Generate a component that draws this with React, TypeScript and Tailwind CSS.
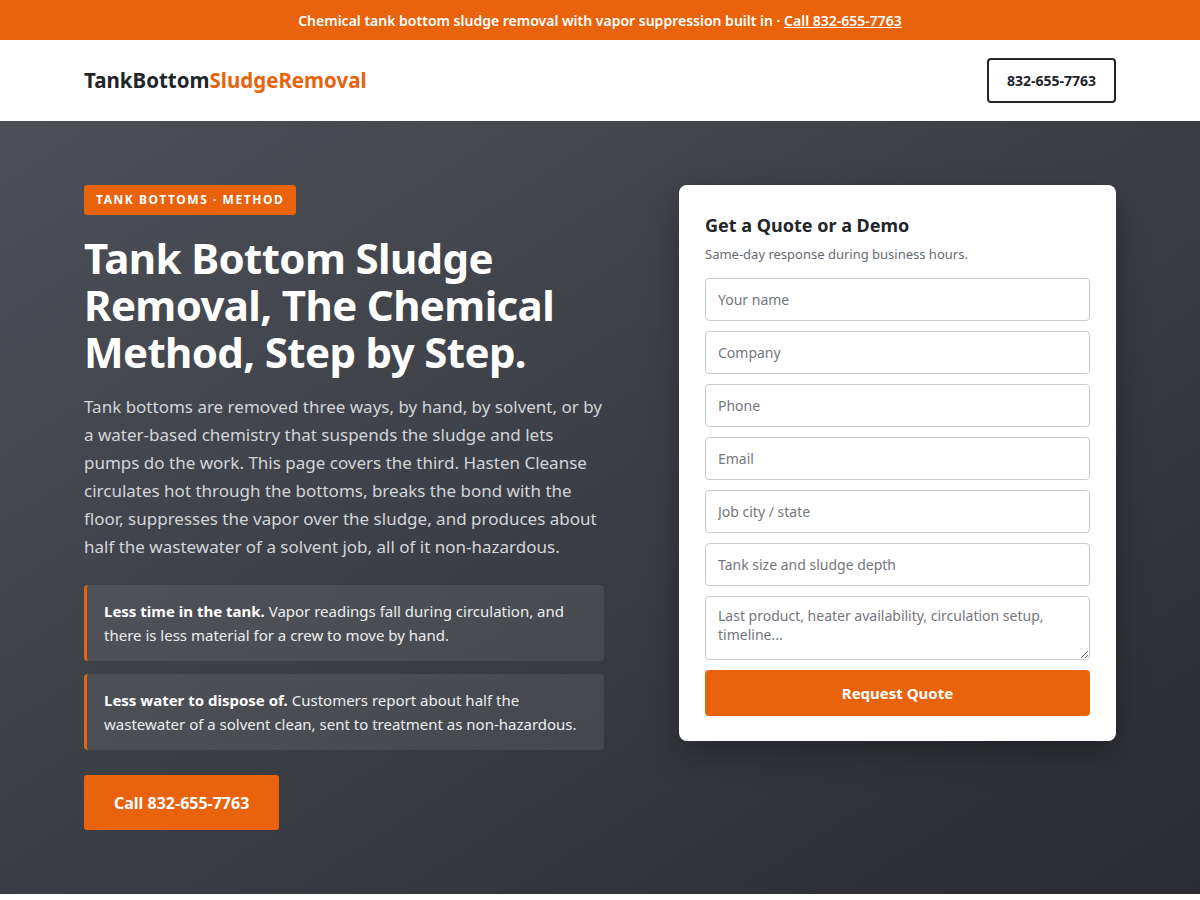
const fields = ["Your name", "Company", "Phone", "Email", "Job city / state", "Tank size and sludge depth"];

const points = [
  {
    lead: "Less time in the tank.",
    text: " Vapor readings fall during circulation, and there is less material for a crew to move by hand.",
  },
  {
    lead: "Less water to dispose of.",
    text: " Customers report about half the wastewater of a solvent clean, sent to treatment as non-hazardous.",
  },
];

export default function App() {
  return (
    <div className="min-h-[900px] bg-white font-['Noto_Sans',_'Open_Sans',_sans-serif] text-[#1f2328]">
      {/* Announcement bar */}
      <div className="flex h-10 items-center justify-center bg-[#e8630c] text-[14px] font-semibold text-white">
        <span>
          Chemical tank bottom sludge removal with vapor suppression built in ·{" "}
          <a href="#" className="underline">
            Call 832-655-7763
          </a>
        </span>
      </div>

      {/* Header */}
      <header className="bg-white">
        <div className="mx-auto flex h-[81px] max-w-[1032px] items-center justify-between">
          <div className="text-[20.5px] font-bold">
            <span className="text-[#22252a]">TankBottom</span>
            <span className="text-[#e8630c]">SludgeRemoval</span>
          </div>
          <a
            href="#"
            className="flex h-[45px] items-center rounded-[4px] border-2 border-[#22252a] px-[18px] text-[14px] font-bold text-[#22252a]"
          >
            832-655-7763
          </a>
        </div>
      </header>

      {/* Hero */}
      <section className="bg-gradient-to-br from-[#4d5058] to-[#2a2c31] py-16">
        <div className="mx-auto flex max-w-[1032px] justify-between">
          <div className="w-[520px]">
            <span className="inline-flex h-[30px] items-center rounded-[3px] bg-[#e8630c] px-3 text-[12px] font-bold tracking-[0.13em] text-white">
              TANK BOTTOMS · METHOD
            </span>
            <h1 className="mt-[19px] text-[42px] font-bold leading-[47px] tracking-[-0.015em] text-white">
              Tank Bottom Sludge Removal, The Chemical Method, Step by Step.
            </h1>
            <p className="mt-[18px] text-[17px] leading-[28px] text-[#d3d5d9]">
              Tank bottoms are removed three ways, by hand, by solvent, or by a water-based chemistry that suspends the
              sludge and lets pumps do the work. This page covers the third. Hasten Cleanse circulates hot through the
              bottoms, breaks the bond with the floor, suppresses the vapor over the sludge, and produces about half the
              wastewater of a solvent job, all of it non-hazardous.
            </p>
            <div className="mt-6 flex flex-col gap-[13px]">
              {points.map((p, i) => (
                <div
                  key={i}
                  className="rounded-[4px] border-l-[3px] border-[#e8630c] bg-white/[0.08] py-[14px] pl-[17px] pr-4 text-[15px] leading-[24px] text-[#eceef0]"
                >
                  <strong className="font-bold text-white">{p.lead}</strong>
                  {p.text}
                </div>
              ))}
            </div>
            <a
              href="#"
              className="mt-[25px] inline-flex h-[55px] items-center rounded-[3px] bg-[#e8630c] px-[30px] text-[16px] font-bold text-white"
            >
              Call 832-655-7763
            </a>
          </div>

          {/* Form card */}
          <div className="h-fit w-[437px] rounded-lg bg-white px-[26px] pb-[25px] pt-[27px] shadow-[0_12px_32px_rgba(0,0,0,0.3)]">
            <h2 className="text-[18px] font-bold leading-[26px] text-[#22252a]">Get a Quote or a Demo</h2>
            <p className="mt-[7px] text-[13px] leading-[18px] text-[#676b72]">Same-day response during business hours.</p>
            <form className="mt-[15px] flex flex-col gap-[10px]">
              {fields.map((f) => (
                <input
                  key={f}
                  placeholder={f}
                  className="h-[43px] w-full rounded-[4px] border border-[#c8cbd0] px-3 text-[14px] text-[#22252a] placeholder:text-[#74777d]"
                />
              ))}
              <textarea
                placeholder="Last product, heater availability, circulation setup, timeline..."
                className="h-[64px] w-full rounded-[4px] border border-[#c8cbd0] px-3 py-[9px] text-[14px] leading-[19px] text-[#22252a] placeholder:text-[#74777d]"
              />
              <button
                type="button"
                className="h-[46px] w-full rounded-[4px] bg-[#e8630c] text-[15px] font-bold text-white"
              >
                Request Quote
              </button>
            </form>
          </div>
        </div>
      </section>
    </div>
  );
}
